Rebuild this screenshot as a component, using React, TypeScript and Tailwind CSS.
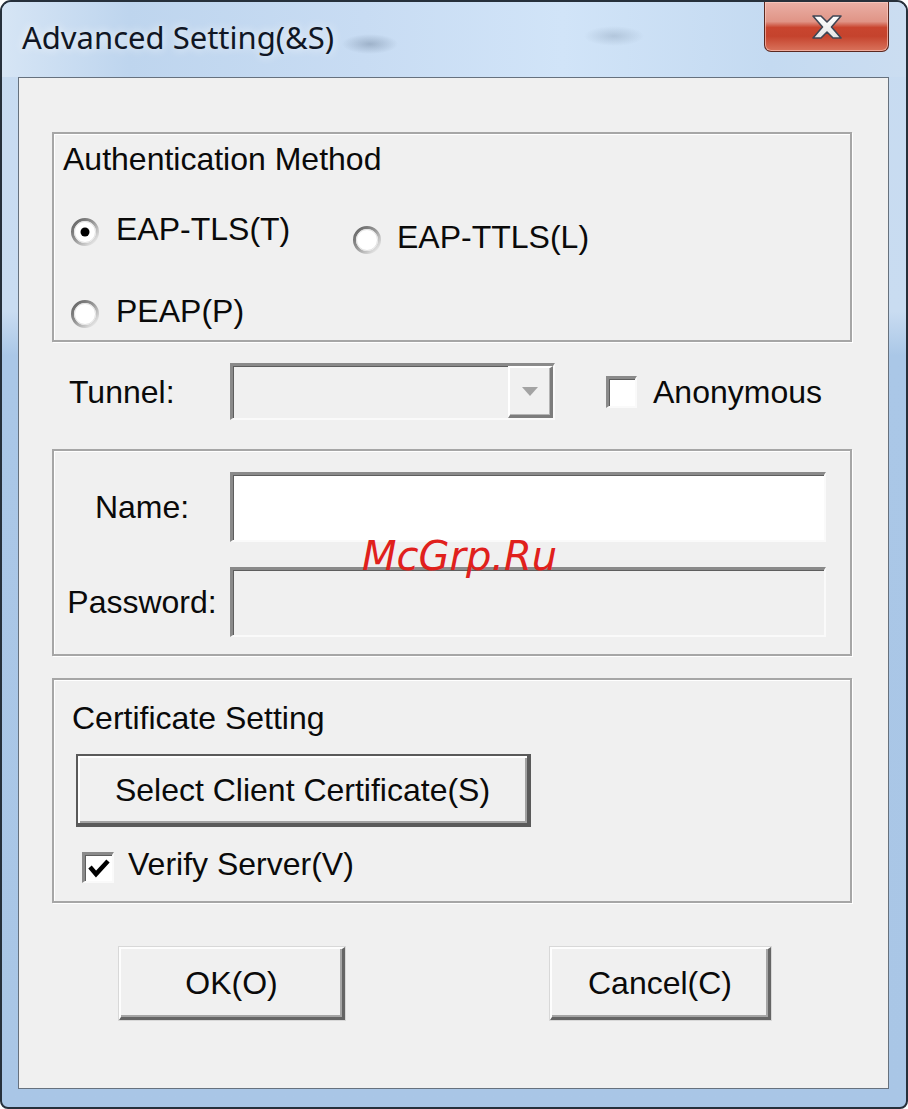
import React from "react";

const T = "font-['Liberation_Sans',Arial,sans-serif] text-[32px] leading-[36px] text-[#0a0a0a]";

const sunken =
  "border-t-[3px] border-l-[3px] border-r-2 border-b-2 border-t-[#8a8a8a] border-l-[#8a8a8a] border-r-[#fafafa] border-b-[#fafafa] shadow-[inset_1px_1px_0_#5e5e5e]";

const group =
  "border-2 border-[#a6a6a6] shadow-[inset_1px_1px_0_#ffffff,1px_1px_0_#ffffff]";

function Radio({ checked }: { checked?: boolean }) {
  return (
    <svg width="30" height="30" viewBox="0 0 30 30" className="shrink-0 translate-y-[3px]">
      <defs>
        <linearGradient id="rg" x1="0" y1="0" x2="1" y2="1">
          <stop offset="0" stopColor="#5e5e5e" />
          <stop offset="0.45" stopColor="#949494" />
          <stop offset="1" stopColor="#f6f6f6" />
        </linearGradient>
      </defs>
      <circle cx="15" cy="15" r="12.5" fill="#ffffff" stroke="url(#rg)" strokeWidth="3" />
      <circle cx="15" cy="15" r="10.5" fill="none" stroke="#e2e2e2" strokeWidth="1" />
      {checked && <circle cx="15" cy="15" r="4.5" fill="#000000" />}
    </svg>
  );
}

function CloseGlyph() {
  return (
    <svg width="30" height="24" viewBox="-1 -1 30 24">
      <defs>
        <linearGradient id="xg" x1="0" y1="0" x2="0" y2="1">
          <stop offset="0" stopColor="#ffffff" />
          <stop offset="1" stopColor="#e4e4e4" />
        </linearGradient>
      </defs>
      <polygon
        points="0,0 8,0 14,6 20,0 28,0 18.5,11 28,22 20,22 14,16 8,22 0,22 9.5,11"
        fill="url(#xg)"
        stroke="#3f4654"
        strokeWidth="1.6"
        strokeLinejoin="round"
      />
    </svg>
  );
}

export default function App() {
  return (
    <div className="relative w-[908px] h-[1109px] bg-white">
      <div className="flex flex-col w-[908px] h-[1109px] border-2 border-[#26303b] rounded-t-[11px] rounded-b-[8px] overflow-hidden bg-[linear-gradient(180deg,#c7dbf1_0%,#c9dcf1_28%,#aac7e7_32%,#a9c6e6_100%)]">
        {/* title bar */}
        <div className="flex items-start h-[75px] pl-[20px] pr-[17px] bg-[radial-gradient(ellipse_28px_10px_at_368px_42px,rgba(80,100,125,0.35),transparent),radial-gradient(ellipse_30px_10px_at_612px_34px,rgba(80,100,125,0.22),transparent),linear-gradient(90deg,#d6e5f5_0%,#bed5ee_14%,#c8dcf3_40%,#d1e4f8_62%,#c4daf1_85%,#cbddf1_100%)]">
          <div className="pt-[17px] font-['Noto_Sans','Open_Sans',sans-serif] text-[31px] leading-[36px] text-[#101624] [text-shadow:0_0_10px_rgba(255,255,255,0.95)]">
            Advanced Setting(&amp;S)
          </div>
          <div className="ml-auto flex items-center justify-center w-[125px] h-[50px] border border-t-0 border-[#5b2820] rounded-b-[7px] bg-[linear-gradient(180deg,#eab0a6_0%,#e09486_40%,#c9452f_52%,#c5432d_70%,#d9735c_100%)] shadow-[inset_0_0_0_1px_rgba(255,210,200,0.6)]">
            <CloseGlyph />
          </div>
        </div>

        {/* client area */}
        <div className="ml-[16px] w-[871px] h-[1012px] border border-[#66717e] bg-[#f0f0f0] flex flex-col">
          {/* Authentication Method */}
          <div className={`mt-[54px] ml-[33px] w-[800px] h-[210px] flex flex-col ${group}`}>
            <div className={`mt-[7px] ml-[9px] ${T}`}>Authentication Method</div>
            <div className="mt-[34px] flex items-start">
              <div className="ml-[16px] w-[282px] flex items-center gap-[16px]">
                <Radio checked />
                <span className={T}>EAP-TLS(T)</span>
              </div>
              <div className="mt-[8px] flex items-center gap-[15px]">
                <Radio />
                <span className={T}>EAP-TTLS(L)</span>
              </div>
            </div>
            <div className="mt-[38px] ml-[16px] flex items-center gap-[16px]">
              <Radio />
              <span className={T}>PEAP(P)</span>
            </div>
          </div>

          {/* Tunnel row */}
          <div className="mt-[21px] ml-[50px] h-[57px] flex items-center">
            <div className={`w-[161px] ${T}`}>Tunnel:</div>
            <div className={`w-[325px] h-[57px] flex justify-end bg-[#f0f0f0] ${sunken}`}>
              <div className="w-[45px] h-full flex items-center justify-center bg-[#f0f0f0] border-t-2 border-l-2 border-r-[3px] border-b-[3px] border-t-[#ffffff] border-l-[#ffffff] border-r-[#7c7c7c] border-b-[#7c7c7c] shadow-[inset_-1px_-1px_0_#b4b4b4]">
                <svg width="16" height="9" viewBox="0 0 16 9">
                  <polygon points="0,0 16,0 8,9" fill="#a3a3a3" />
                </svg>
              </div>
            </div>
            <div className={`ml-[51px] w-[31px] h-[32px] bg-white ${sunken}`} />
            <div className={`ml-[16px] ${T}`}>Anonymous</div>
          </div>

          {/* Name / Password */}
          <div className={`mt-[29px] ml-[33px] w-[800px] h-[207px] flex flex-col pt-[21px] ${group}`}>
            <div className="flex items-center">
              <div className={`w-[176px] text-center ${T}`}>Name:</div>
              <div className={`w-[596px] h-[70px] bg-white ${sunken}`} />
            </div>
            <div className="mt-[25px] flex items-center">
              <div className={`w-[176px] text-center ${T}`}>Password:</div>
              <div className={`w-[596px] h-[70px] bg-[#f0f0f0] ${sunken}`} />
            </div>
          </div>

          {/* Certificate Setting */}
          <div className={`mt-[22px] ml-[33px] w-[800px] h-[225px] flex flex-col pt-[20px] ${group}`}>
            <div className={`ml-[18px] ${T}`}>Certificate Setting</div>
            <div
              className={`mt-[18px] ml-[22px] w-[455px] h-[73px] flex items-center justify-center bg-[#f0f0f0] border-t-2 border-l-2 border-r-[4px] border-b-[4px] border-[#5a5a5a] shadow-[inset_2px_2px_0_#ffffff,inset_-2px_-2px_0_#a2a2a2] ${T}`}
            >
              Select Client Certificate(S)
            </div>
            <div className="mt-[19px] ml-[28px] flex items-center">
              <div className={`w-[32px] h-[31px] bg-white flex items-center justify-center translate-y-[3px] ${sunken}`}>
                <svg width="22" height="20" viewBox="0 0 22 20">
                  <polyline points="2,9 8,16 20,3" fill="none" stroke="#000" strokeWidth="4.5" strokeLinejoin="miter" />
                </svg>
              </div>
              <div className={`ml-[14px] ${T}`}>Verify Server(V)</div>
            </div>
          </div>

          {/* OK / Cancel */}
          <div className="mt-[44px] flex">
            <div
              className={`ml-[100px] w-[226px] h-[73px] flex items-center justify-center bg-[#f0f0f0] border-t-2 border-l-2 border-r-[3px] border-b-[3px] border-t-[#fdfdfd] border-l-[#fdfdfd] border-r-[#656565] border-b-[#656565] shadow-[inset_-2px_-2px_0_#a5a5a5,0_0_0_1px_#d8d8d8] ${T}`}
            >
              OK(O)
            </div>
            <div
              className={`ml-[205px] w-[221px] h-[73px] flex items-center justify-center bg-[#f0f0f0] border-t-2 border-l-2 border-r-[3px] border-b-[3px] border-t-[#fdfdfd] border-l-[#fdfdfd] border-r-[#656565] border-b-[#656565] shadow-[inset_-2px_-2px_0_#a5a5a5,0_0_0_1px_#d8d8d8] ${T}`}
            >
              Cancel(C)
            </div>
          </div>
        </div>
      </div>

      {/* watermark */}
      <div className="absolute left-[362px] top-[537px] font-['DejaVu_Sans',sans-serif] italic text-[40px] leading-[39px] text-[#e0201c]">
        McGrp.Ru
      </div>
    </div>
  );
}
